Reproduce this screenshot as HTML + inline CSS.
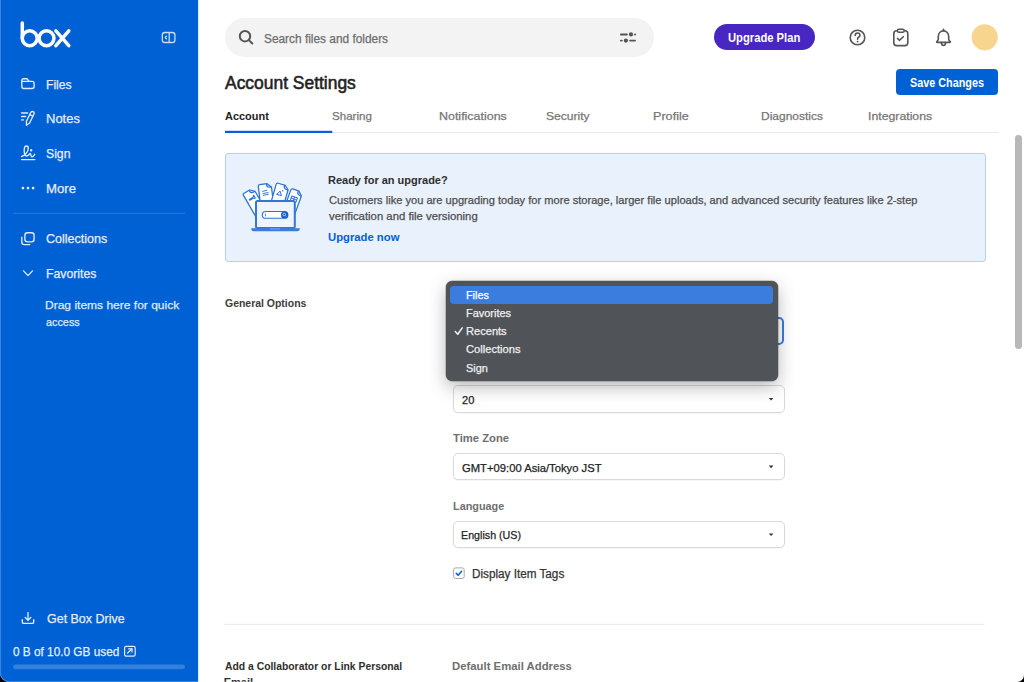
<!DOCTYPE html>
<html><head><meta charset="utf-8">
<style>
html,body{margin:0;padding:0;}
body{width:1024px;height:682px;overflow:hidden;background:#000;position:relative;font-family:"Liberation Sans",sans-serif;}
#win{position:absolute;left:0;top:0;width:1024px;height:682px;background:#fff;border-radius:0 0 7px 9px;overflow:hidden;}
#side{position:absolute;left:0;top:0;width:198px;height:682px;background:#0061d5;}
#side .edge{position:absolute;left:0;top:0;width:1px;height:682px;background:#3583e0;}
.t{position:absolute;white-space:pre;font-family:"Liberation Sans",sans-serif;-webkit-text-stroke:0.25px currentColor;}
.t[style*="font-weight:700"]{-webkit-text-stroke:0;}
.t[style*="font-size:17.5px"]{-webkit-text-stroke:0.55px currentColor;}
.abs{position:absolute;}
svg{position:absolute;overflow:visible;}
</style></head><body>
<div id="win">
 <div id="side">
  <!-- logo -->
  <svg class="abs" style="left:0;top:0" width="198" height="60">
   <g fill="none" stroke="#fff" stroke-width="3.5" stroke-linecap="round">
    <line x1="22.3" y1="22.9" x2="22.3" y2="38.2"/>
    <circle cx="29.7" cy="38.2" r="7.45"/>
    <circle cx="46.5" cy="38.2" r="7.45"/>
    <line x1="55.9" y1="30.8" x2="68.8" y2="45.6"/>
    <line x1="68.8" y1="30.8" x2="55.9" y2="45.6"/>
   </g>
   <!-- collapse icon -->
   <g fill="none" stroke="#c9dcf6" stroke-width="1.3">
    <rect x="162.3" y="32.5" width="12.6" height="10" rx="2.6"/>
    <line x1="169.2" y1="32.5" x2="169.2" y2="42.5"/>
    <polyline points="166.4,36.3 165.2,37.5 166.4,38.7" stroke-linecap="round" stroke-linejoin="round"/>
   </g>
  </svg>
  <!-- nav icons -->
  <svg class="abs" style="left:0;top:0" width="198" height="682">
   <g fill="none" stroke="#e3ecfa" stroke-width="1.35" stroke-linecap="round" stroke-linejoin="round">
    <!-- folder -->
    <path d="M21.8,80.5 V86.5 Q21.8,88.5 23.8,88.5 H32.1 Q34.1,88.5 34.1,86.5 V83.3 Q34.1,81.3 32.1,81.3 H28.9 L27.7,79.4 Q27.3,78.7 26.5,78.7 H23.6 Q21.8,78.7 21.8,80.5 Z"/>
    <line x1="21.8" y1="81.3" x2="29" y2="81.3"/>
    <!-- notes -->
    <line x1="21.6" y1="113" x2="27.6" y2="113"/>
    <line x1="21.6" y1="116.5" x2="25.6" y2="116.5"/>
    <line x1="21.6" y1="119.9" x2="23.5" y2="119.9"/>
    <path d="M30.67,112.53 A1.8,1.8 0 0 1 33.93,114.07 L29.63,123.07 L26.5,125.3 L26.37,121.53 Z"/>
    <line x1="29.8" y1="114.7" x2="32.8" y2="116.1"/>
    <!-- sign -->
    <path d="M21.5,156.6 C24.5,155.5 28.3,152 28.3,148.5 C28.3,146.8 27.5,146 26.3,146 C25,146 24.2,147.5 24.2,150.5 C24.2,153.5 24.8,156 26.5,156 C28,156 29.3,154.5 30.3,153.4 C30.8,154.8 31,156.8 32,156.8 C33,156.8 34,155.5 34.7,154.3"/>
    <circle cx="31.2" cy="150.2" r="0.5" fill="#e3ecfa"/>
    <line x1="21.6" y1="159.6" x2="34.8" y2="159.6"/>
    <!-- collections -->
    <rect x="24.9" y="232.7" width="9.2" height="9.1" rx="2.5"/>
    <path d="M21.8,237.1 V242 Q21.8,244.6 24.4,244.6 H29.7"/>
    <!-- chevron -->
    <polyline points="23.5,270.9 28,275.6 32.5,270.9"/>
    <!-- download -->
    <line x1="28" y1="612.6" x2="28" y2="620"/>
    <polyline points="25.2,617.4 28,620.2 30.8,617.4"/>
    <path d="M22.3,619.6 v2.3 q0,1.5 1.5,1.5 h8.4 q1.5,0 1.5,-1.5 v-2.3"/>
    <!-- external link -->
    <rect x="124.6" y="646.4" width="10.6" height="9.7" rx="1.6" stroke-width="1.2"/>
    <line x1="127.6" y1="653" x2="132" y2="648.8" stroke-width="1.2"/>
    <polyline points="128.6,648.8 132,648.8 132,652" stroke-width="1.2"/>
   </g>
   <g fill="#e3ecfa">
    <circle cx="22.9" cy="188.1" r="1.35"/><circle cx="28" cy="188.1" r="1.35"/><circle cx="33.1" cy="188.1" r="1.35"/>
   </g>
   <line x1="13.3" y1="213.3" x2="185" y2="213.3" stroke="#2a78d8" stroke-width="1"/>
   <rect x="13" y="664.4" width="172" height="4.9" rx="2.45" fill="#3281dc"/>
  </svg>
 </div>

 <div class="abs" style="left:198px;top:0;width:1px;height:682px;background:#dce8f8;"></div>
 <!-- top bar -->
 <div class="abs" style="left:225px;top:18px;width:429px;height:39px;border-radius:20px;background:#f3f3f3;"></div>
 <svg class="abs" style="left:0;top:0" width="1024" height="140">
  <g fill="none" stroke="#555" stroke-width="2" stroke-linecap="round">
   <circle cx="245" cy="36.2" r="5.2"/>
   <line x1="248.9" y1="40.1" x2="252.3" y2="43.5"/>
  </g>
  <g stroke="#555" stroke-width="1.9" stroke-linecap="round" fill="#555">
   <line x1="620.9" y1="34.45" x2="626.9" y2="34.45"/>
   <line x1="635" y1="34.45" x2="635.1" y2="34.45"/>
   <circle cx="631" cy="34.45" r="1.2"/>
   <line x1="620.9" y1="40.6" x2="621.8" y2="40.6"/>
   <line x1="630.1" y1="40.6" x2="635" y2="40.6"/>
   <circle cx="625.9" cy="40.6" r="1.2"/>
  </g>
  <!-- help -->
  <g fill="none" stroke="#555" stroke-width="1.6" stroke-linecap="round">
   <circle cx="857.5" cy="37.5" r="7.3"/>
   <path d="M855.2,35.4 q0,-2.4 2.4,-2.4 q2.3,0 2.3,2.2 q0,1.4 -1.4,2.1 q-0.9,0.5 -0.9,1.6 v0.4"/>
  </g>
  <circle cx="857.6" cy="41.6" r="0.95" fill="#555"/>
  <!-- clipboard -->
  <g fill="none" stroke="#555" stroke-width="1.6" stroke-linecap="round" stroke-linejoin="round">
   <path d="M896.8,30.8 h-0.2 q-2.8,0 -2.8,2.8 v9.2 q0,2.8 2.8,2.8 h8.4 q2.8,0 2.8,-2.8 v-9.2 q0,-2.8 -2.8,-2.8 h-0.2"/>
   <rect x="897.4" y="29.2" width="6.8" height="3" rx="1.4"/>
   <polyline points="897.5,38.4 899.6,40.3 903.3,36.7"/>
  </g>
  <!-- bell -->
  <g fill="none" stroke="#555" stroke-width="1.6" stroke-linecap="round" stroke-linejoin="round">
   <path d="M943.5,30.9 C940.5,30.9 938.3,33.2 938.3,36.6 V39 C938.3,40.5 937.2,41.2 936.8,41.6 C936.5,42 936.7,42.4 937.2,42.4 H949.8 C950.3,42.4 950.5,42 950.2,41.6 C949.8,41.2 948.7,40.5 948.7,39 V36.6 C948.7,33.2 946.5,30.9 943.5,30.9 Z"/>
   <path d="M941.4,42.6 C941.4,44.2 942.3,45.5 943.5,45.5 C944.7,45.5 945.6,44.2 945.6,42.6"/>
   <line x1="943.5" y1="29.2" x2="943.5" y2="30.4"/>
  </g>
  <circle cx="984.7" cy="37.3" r="13.1" fill="#f8d58f"/>
  <!-- tab lines -->
  <rect x="225" y="132" width="773" height="1" fill="#e8e8e8"/>
  <rect x="225" y="130.8" width="107.3" height="2.2" fill="#0061d5"/>
 </svg>
 <div class="abs" style="left:714px;top:24.4px;width:101px;height:26px;border-radius:13px;background:#4826c2;"></div>
 <div class="abs" style="left:896px;top:69px;width:102px;height:26.3px;border-radius:4px;background:#0061d5;"></div>

 <!-- scrollbar -->
 <div class="abs" style="left:1015px;top:135px;width:7px;height:214px;border-radius:3.5px;background:#b8b8b8;"></div>

 <!-- banner -->
 <div class="abs" style="left:225px;top:153px;width:759px;height:107px;border:1px solid #b6d0f2;border-radius:3px;background:#e9f1fc;"></div>
 <svg class="abs" style="left:0;top:0" width="1024" height="682" id="illus"><g stroke="#2b72d8" stroke-width="1.25" stroke-linejoin="round" fill="#fff">
 <!-- doc1 -->
 <g transform="translate(242.7,194) rotate(-30)">
  <path d="M0,1.6 q0,-1.6 1.6,-1.6 h6.4 l4,3.8 v24 h-12 z"/>
  <path d="M7.6,0 q-0.6,2.6 1.2,3.4 q1.2,0.5 3.2,0.4" fill="none"/>
  <path d="M3,8 h4 l2,-1.5 v3.5 l-2,-1 h-4 z" fill="none" stroke-width="1"/>
 </g>
 <!-- doc4 -->
 <g transform="translate(291.4,188.4) rotate(20)">
  <path d="M0,1.6 q0,-1.6 1.6,-1.6 h6.4 l4,3.8 v24 h-12 z"/>
  <path d="M7.6,0 q-0.6,2.6 1.2,3.4 q1.2,0.5 3.2,0.4" fill="none"/>
  <rect x="3" y="7" width="6" height="4.5" fill="none" stroke-width="1"/>
  <line x1="3" y1="9.2" x2="9" y2="9.2" stroke-width="0.9"/>
  <line x1="6" y1="7" x2="6" y2="11.5" stroke-width="0.9"/>
 </g>
 <!-- doc2 -->
 <g transform="translate(258.1,184.8) rotate(-7)">
  <path d="M0,1.6 q0,-1.6 1.6,-1.6 h7.4 l4,3.8 v22 h-13 z"/>
  <path d="M8.6,0 q-0.6,2.6 1.2,3.4 q1.2,0.5 3.2,0.4" fill="none"/>
  <line x1="3.4" y1="7.2" x2="8.4" y2="6.4" stroke-width="0.9"/>
  <line x1="3.4" y1="9.2" x2="9.4" y2="9" stroke-width="0.9"/>
  <line x1="3.4" y1="11.2" x2="9.4" y2="10.6" stroke-width="0.9"/>
 </g>
 <!-- doc3 -->
 <g transform="translate(276.6,182.8) rotate(16)">
  <path d="M0,1.6 q0,-1.6 1.6,-1.6 h7.4 l4,3.8 v22 h-13 z"/>
  <path d="M8.6,0 q-0.6,2.6 1.2,3.4 q1.2,0.5 3.2,0.4" fill="none"/>
  <path d="M3.2,11 l2.5,-4 l2.5,4 z" fill="none" stroke-width="0.9"/>
  <circle cx="8" cy="6" r="0.7" fill="#2b72d8" stroke="none"/>
 </g>
</g>
<!-- laptop -->
<rect x="256" y="201" width="38.8" height="27" rx="1.5" fill="#eef4fd" stroke="#3277d8" stroke-width="2"/>
<path d="M251.2,228.3 h48.6 q0,3 -2.5,3 h-43.6 q-2.5,0 -2.5,-3 z" fill="#3b7ddb"/>
<rect x="270" y="228.3" width="10" height="1.2" fill="#6fa0e6"/>
<rect x="262.3" y="211.5" width="25.5" height="6.8" rx="3.4" fill="#fff" stroke="#2b72d8" stroke-width="1.1"/>
<circle cx="284.6" cy="214.9" r="3.6" fill="#1f5fc6"/>
<circle cx="284.2" cy="214.5" r="1.3" fill="none" stroke="#d6e4fa" stroke-width="0.7"/>
<line x1="285.1" y1="215.4" x2="286.1" y2="216.4" stroke="#d6e4fa" stroke-width="0.7"/>
<line x1="265.5" y1="213.6" x2="265.5" y2="216.4" stroke="#2b72d8" stroke-width="0.8"/>
</svg>

 <!-- form selects -->
 <div class="abs sel" style="left:453px;top:316.5px;width:327.2px;height:24.7px;border:2px solid #3b7ed9;border-radius:5px;background:#fff;"></div>
 <div class="abs sel" style="left:453px;top:385.4px;width:329.5px;height:25.2px;border:1px solid #d9d9d9;border-radius:5px;background:#fff;box-shadow:0 1px 1px rgba(0,0,0,0.04);"></div>
 <div class="abs sel" style="left:453px;top:452.8px;width:329.5px;height:25.4px;border:1px solid #d9d9d9;border-radius:5px;background:#fff;box-shadow:0 1px 1px rgba(0,0,0,0.04);"></div>
 <div class="abs sel" style="left:453px;top:520.7px;width:329.5px;height:25.2px;border:1px solid #d9d9d9;border-radius:5px;background:#fff;box-shadow:0 1px 1px rgba(0,0,0,0.04);"></div>
 <svg class="abs" style="left:0;top:0" width="1024" height="682">
  <path d="M768.8,398 h4.6 l-2.3,2.6 z" fill="#333"/>
  <path d="M768.8,465.6 h4.6 l-2.3,2.6 z" fill="#333"/>
  <path d="M768.8,533.5 h4.6 l-2.3,2.6 z" fill="#333"/>
  <rect x="453.6" y="567.9" width="10.6" height="10.6" rx="2" fill="#fff" stroke="#a8a8a8" stroke-width="1"/>
  <polyline points="456.3,573.4 458.2,575.3 461.6,571.2" fill="none" stroke="#0061d5" stroke-width="1.5" stroke-linecap="round" stroke-linejoin="round"/>
  <rect x="224.5" y="623.8" width="760" height="1" fill="#e8e8e8"/>
 </svg>

 <!-- menu -->
 <div class="abs" style="left:445.5px;top:281px;width:332.5px;height:99.5px;border-radius:6px;background:#505357;box-shadow:0 0 0 0.5px rgba(0,0,0,0.35),0 6px 18px rgba(0,0,0,0.28);"></div>
 <div class="abs" style="left:450px;top:285.6px;width:323.3px;height:18.2px;border-radius:4px;background:#3a7ddf;"></div>
 <svg class="abs" style="left:0;top:0" width="1024" height="682">
  <polyline points="455.3,331.5 457.8,334.3 462.2,327.9" fill="none" stroke="#f0f0f0" stroke-width="1.55" stroke-linecap="round" stroke-linejoin="round"/>
 </svg>

 <div class="t" style="left:45.73px;top:78.60px;font-size:12.5px;line-height:12.5px;color:#e6eefa;transform:scaleX(0.9720);transform-origin:0 0;">Files</div>
<div class="t" style="left:45.66px;top:113.20px;font-size:12.5px;line-height:12.5px;color:#e6eefa;transform:scaleX(1.0387);transform-origin:0 0;">Notes</div>
<div class="t" style="left:45.72px;top:147.80px;font-size:12.5px;line-height:12.5px;color:#e6eefa;transform:scaleX(0.9783);transform-origin:0 0;">Sign</div>
<div class="t" style="left:45.65px;top:182.50px;font-size:12.5px;line-height:12.5px;color:#e6eefa;transform:scaleX(1.0519);transform-origin:0 0;">More</div>
<div class="t" style="left:45.90px;top:233.00px;font-size:12.5px;line-height:12.5px;color:#e6eefa;transform:scaleX(1.0033);transform-origin:0 0;">Collections</div>
<div class="t" style="left:45.92px;top:267.80px;font-size:12.5px;line-height:12.5px;color:#e6eefa;transform:scaleX(0.9800);transform-origin:0 0;">Favorites</div>
<div class="t" style="left:45.16px;top:300.00px;font-size:11px;line-height:11px;color:#dfe9f8;transform:scaleX(1.0922);transform-origin:0 0;">Drag items here for quick</div>
<div class="t" style="left:46.25px;top:316.60px;font-size:11px;line-height:11px;color:#dfe9f8;transform:scaleX(0.9853);transform-origin:0 0;">access</div>
<div class="t" style="left:46.70px;top:612.60px;font-size:12.5px;line-height:12.5px;color:#e6eefa;transform:scaleX(0.9974);transform-origin:0 0;">Get Box Drive</div>
<div class="t" style="left:13.20px;top:645.80px;font-size:12px;line-height:12px;color:#e6eefa;transform:scaleX(0.9833);transform-origin:0 0;">0 B of 10.0 GB used</div>
<div class="t" style="left:264.35px;top:32.50px;font-size:12.5px;line-height:12.5px;color:#6d6d6d;transform:scaleX(0.9496);transform-origin:0 0;">Search files and folders</div>
<div class="t" style="left:728.07px;top:32.20px;font-size:12px;line-height:12px;color:#ffffff;font-weight:700;transform:scaleX(0.9342);transform-origin:0 0;">Upgrade Plan</div>
<div class="t" style="left:909.60px;top:76.70px;font-size:12px;line-height:12px;color:#ffffff;font-weight:700;transform:scaleX(0.9012);transform-origin:0 0;">Save Changes</div>
<div class="t" style="left:225.00px;top:75.20px;font-size:17.5px;line-height:17.5px;color:#222222;transform:scaleX(0.9962);transform-origin:0 0;">Account Settings</div>
<div class="t" style="left:225.00px;top:111.00px;font-size:11.5px;line-height:11.5px;color:#222222;font-weight:700;transform:scaleX(0.9522);transform-origin:0 0;">Account</div>
<div class="t" style="left:331.79px;top:111.00px;font-size:11.5px;line-height:11.5px;color:#767676;transform:scaleX(1.0053);transform-origin:0 0;">Sharing</div>
<div class="t" style="left:438.82px;top:111.00px;font-size:11.5px;line-height:11.5px;color:#767676;transform:scaleX(1.0823);transform-origin:0 0;">Notifications</div>
<div class="t" style="left:545.95px;top:111.00px;font-size:11.5px;line-height:11.5px;color:#767676;transform:scaleX(1.0488);transform-origin:0 0;">Security</div>
<div class="t" style="left:653.20px;top:111.00px;font-size:11.5px;line-height:11.5px;color:#767676;transform:scaleX(1.0968);transform-origin:0 0;">Profile</div>
<div class="t" style="left:761.16px;top:111.00px;font-size:11.5px;line-height:11.5px;color:#767676;transform:scaleX(1.0414);transform-origin:0 0;">Diagnostics</div>
<div class="t" style="left:868.13px;top:111.00px;font-size:11.5px;line-height:11.5px;color:#767676;transform:scaleX(1.0678);transform-origin:0 0;">Integrations</div>
<div class="t" style="left:328.44px;top:174.60px;font-size:11.5px;line-height:11.5px;color:#2e2e2e;font-weight:700;transform:scaleX(0.9556);transform-origin:0 0;">Ready for an upgrade?</div>
<div class="t" style="left:329.40px;top:195.00px;font-size:11px;line-height:11px;color:#4e4e4e;transform:scaleX(1.0089);transform-origin:0 0;">Customers like you are upgrading today for more storage, larger file uploads, and advanced security features like 2-step</div>
<div class="t" style="left:329.40px;top:211.30px;font-size:11px;line-height:11px;color:#4e4e4e;transform:scaleX(1.0306);transform-origin:0 0;">verification and file versioning</div>
<div class="t" style="left:328.42px;top:232.20px;font-size:11.5px;line-height:11.5px;color:#0061d5;font-weight:700;transform:scaleX(0.9806);transform-origin:0 0;">Upgrade now</div>
<div class="t" style="left:225.20px;top:297.50px;font-size:11px;line-height:11px;color:#3c3c3c;font-weight:700;transform:scaleX(0.9506);transform-origin:0 0;">General Options</div>
<div class="t" style="left:461.80px;top:394.50px;font-size:11.5px;line-height:11.5px;color:#222222;transform:scaleX(0.9615);transform-origin:0 0;">20</div>
<div class="t" style="left:453.40px;top:433.20px;font-size:11.5px;line-height:11.5px;color:#6f6f6f;font-weight:700;transform:scaleX(0.9789);transform-origin:0 0;">Time Zone</div>
<div class="t" style="left:461.70px;top:462.60px;font-size:11.5px;line-height:11.5px;color:#222222;transform:scaleX(0.9769);transform-origin:0 0;">GMT+09:00 Asia/Tokyo JST</div>
<div class="t" style="left:452.66px;top:500.80px;font-size:11.5px;line-height:11.5px;color:#6f6f6f;font-weight:700;transform:scaleX(0.9434);transform-origin:0 0;">Language</div>
<div class="t" style="left:460.87px;top:529.75px;font-size:11.5px;line-height:11.5px;color:#222222;transform:scaleX(0.9302);transform-origin:0 0;">English (US)</div>
<div class="t" style="left:472.42px;top:567.80px;font-size:12px;line-height:12px;color:#333333;transform:scaleX(0.9763);transform-origin:0 0;">Display Item Tags</div>
<div class="t" style="left:224.70px;top:660.50px;font-size:11px;line-height:11px;color:#2e2e2e;font-weight:700;transform:scaleX(0.9415);transform-origin:0 0;">Add a Collaborator or Link Personal</div>
<div class="t" style="left:223.70px;top:677.00px;font-size:11px;line-height:11px;color:#2e2e2e;font-weight:700;">Email</div>
<div class="t" style="left:451.91px;top:660.50px;font-size:11.5px;line-height:11.5px;color:#6f6f6f;font-weight:700;transform:scaleX(0.9858);transform-origin:0 0;">Default Email Address</div>
<div class="t" style="left:465.82px;top:290.00px;font-size:11px;line-height:11px;color:#ffffff;transform:scaleX(0.9818);transform-origin:0 0;">Files</div>
<div class="t" style="left:465.80px;top:308.10px;font-size:11px;line-height:11px;color:#f0f0f0;transform:scaleX(0.9955);transform-origin:0 0;">Favorites</div>
<div class="t" style="left:465.79px;top:326.40px;font-size:11px;line-height:11px;color:#f0f0f0;transform:scaleX(1.0077);transform-origin:0 0;">Recents</div>
<div class="t" style="left:466.20px;top:344.40px;font-size:11px;line-height:11px;color:#f0f0f0;transform:scaleX(1.0130);transform-origin:0 0;">Collections</div>
<div class="t" style="left:465.81px;top:362.50px;font-size:11px;line-height:11px;color:#f0f0f0;transform:scaleX(0.9905);transform-origin:0 0;">Sign</div>
 <div class="abs" style="left:0;top:0;width:1023px;height:681px;border-left:1px solid rgba(255,255,255,0.22);border-bottom:1px solid rgba(255,255,255,0.22);border-radius:0 0 7px 9px;"></div>
</div>
</body></html>
